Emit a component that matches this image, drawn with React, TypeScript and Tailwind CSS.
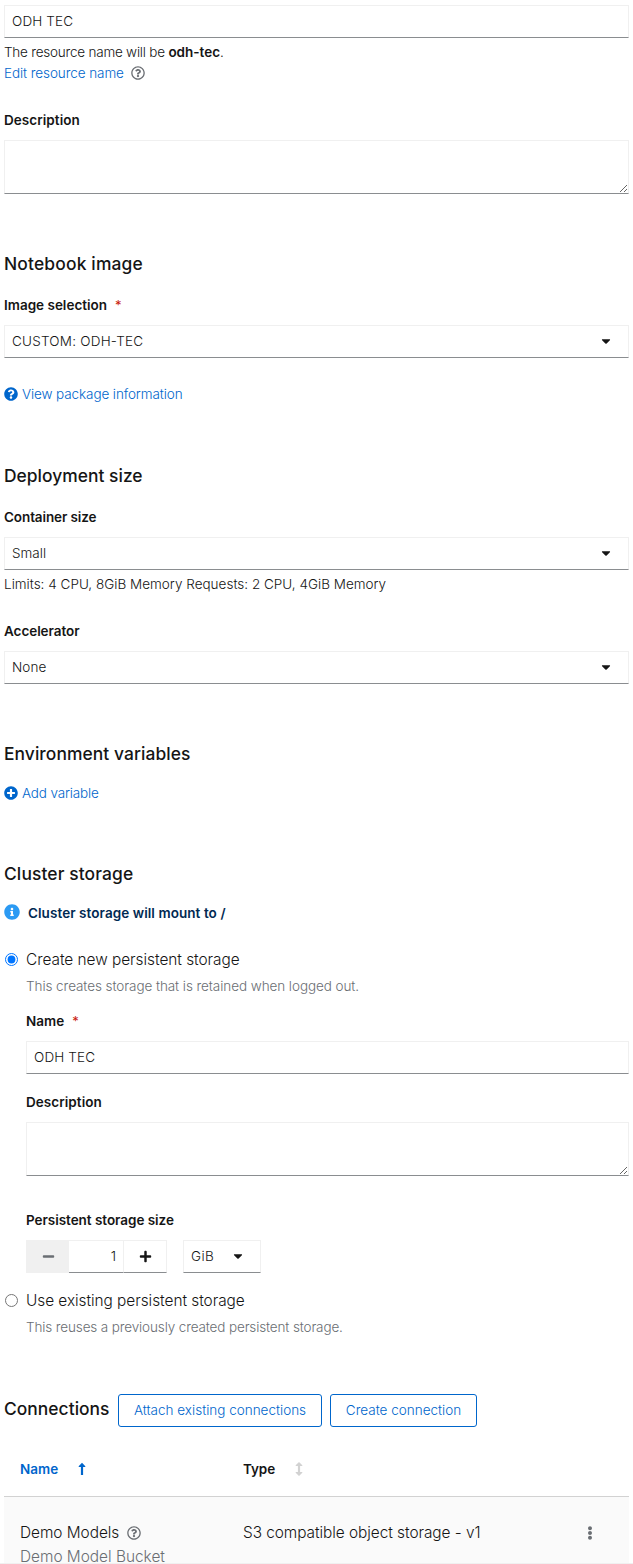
import type { ReactNode } from "react";
import {
  FaCaretDown,
  FaEllipsisV,
  FaInfoCircle,
  FaMinus,
  FaPlus,
  FaPlusCircle,
  FaQuestionCircle,
  FaRegQuestionCircle,
} from "react-icons/fa";

type BlockProps = { className?: string; children?: ReactNode };

const control =
  "border border-[#f0f0f0] border-b-[#8a8d90] bg-white rounded-none outline-none";

function Heading({ className = "", children }: BlockProps) {
  return (
    <h2 className={`h-6 text-[17.4px] leading-6 font-[540] whitespace-nowrap text-[#151515] ${className}`}>
      {children}
    </h2>
  );
}

function Label({ className = "", required, children }: BlockProps & { required?: boolean }) {
  return (
    <div className={`mb-[9px] flex h-[21px] font-semibold text-[#151515] ${className}`}>
      {children}
      {required && <span className="ml-2 text-[13px] font-normal tracking-normal text-[#c9190b]">*</span>}
    </div>
  );
}

function TextField({ value }: { value: string }) {
  return (
    <input
      className={`block h-[33px] w-full px-[7px] pb-[2px] tracking-[0.15px] text-[#151515] ${control}`}
      defaultValue={value}
    />
  );
}

function TextBox() {
  return <textarea className={`block h-[54px] w-full resize-y ${control}`} />;
}

function Select({ children }: BlockProps) {
  return (
    <div className={`flex h-[33px] w-full items-center justify-between pr-[15px] pl-[7px] ${control}`}>
      {children}
      <FaCaretDown className="mb-px size-[14px] text-[#151515]" />
    </div>
  );
}

function SortUpIcon() {
  return (
    <svg viewBox="0 0 8 14" className="mb-px h-[14px] w-2 fill-current">
      <path d="M4 .8 7.3 4.2V5H5.1V13H2.9V5H.7V4.2Z" />
    </svg>
  );
}

function SortIcon() {
  return (
    <svg viewBox="0 0 8 14" className="mb-px h-[14px] w-2 fill-[#d2d2d2]">
      <path d="M4 0 7.3 3.2V4H5.1V10H7.3V10.8L4 14 .7 10.8V10H2.9V4H.7V3.2Z" />
    </svg>
  );
}

export default function App() {
  return (
    <div className="flex h-[1564px] flex-col overflow-hidden border-b border-[#f0f0f0] bg-white px-1 pt-[5px] font-['Inter','Liberation_Sans',sans-serif] text-[13.5px] leading-[21px] font-[350] text-[#151515] *:shrink-0">
      <TextField value="ODH TEC" />
      <div className="mt-1 whitespace-pre">
        <span className="tracking-[-0.22px]">{"The resource name will be "}</span>
        <span className="font-semibold">odh-tec</span>.
      </div>
      <div className="flex items-center gap-[7px] text-[#0066cc]">
        <span className="tracking-[-0.08px]">Edit resource name</span>
        <FaRegQuestionCircle className="mb-px size-[14px] text-[#6a6e73]" />
      </div>

      <Label className="mt-[26px] tracking-[0.05px]">Description</Label>
      <TextBox />

      <Heading className="mt-[58px] tracking-[0.18px]">Notebook image</Heading>
      <Label required className="mt-[19px] tracking-[0px]">Image selection</Label>
      <Select>
        <span className="tracking-[0.22px]">CUSTOM: ODH-TEC</span>
      </Select>
      <div className="mt-[26px] flex items-center gap-1 text-[#0066cc]">
        <FaQuestionCircle className="mb-px size-[14px]" />
        <span className="tracking-[-0.1px]">View package information</span>
      </div>

      <Heading className="mt-[59px] tracking-[0.03px]">Deployment size</Heading>
      <Label className="mt-[19px] tracking-[-0.1px]">Container size</Label>
      <Select>
        <span className="tracking-[0px]">Small</span>
      </Select>
      <div className="mt-1 tracking-[0.01px]">
        Limits: 4 CPU, 8GiB Memory Requests: 2 CPU, 4GiB Memory
      </div>
      <Label className="mt-[26px] tracking-[-0.05px]">Accelerator</Label>
      <Select>
        <span className="tracking-[0.12px]">None</span>
      </Select>

      <Heading className="mt-[58px] tracking-[0.08px]">Environment variables</Heading>
      <div className="mt-[17px] flex items-center gap-1 text-[#0066cc]">
        <FaPlusCircle className="mb-px size-[14px]" />
        <span className="tracking-[-0.15px]">Add variable</span>
      </div>

      <Heading className="mt-[58px] tracking-[0.12px]">Cluster storage</Heading>
      <div className="mt-[17px] flex h-[21px] gap-2 font-semibold text-[#002952]">
        <FaInfoCircle className="mt-px size-4 text-[#2b9af3]" />
        <span className="tracking-[0.07px]">Cluster storage will mount to /</span>
      </div>

      <div className="mt-6 flex h-6 items-center gap-2 text-[15.4px] leading-6">
        <input type="radio" name="storage" defaultChecked className="m-0 mb-px ml-px size-[13px]" />
        <span className="tracking-[-0.03px]">Create new persistent storage</span>
      </div>
      <div className="flex flex-col pl-[22px] *:shrink-0">
        <div className="mt-1 tracking-[-0.07px] text-[#6a6e73]">
          This creates storage that is retained when logged out.
        </div>
        <Label required className="mt-[14px] tracking-[0px]">Name</Label>
        <TextField value="ODH TEC" />
        <Label className="mt-[18px] tracking-[0.05px]">Description</Label>
        <TextBox />
        <Label className="mt-[34px] tracking-[-0.04px]">Persistent storage size</Label>
        <div className="flex h-[33px]">
          <button className="flex w-[43px] items-center justify-center bg-[#f0f0f0]">
            <FaMinus className="ml-px size-[13px] text-[#6a6e73]" />
          </button>
          <input
            className={`w-[55px] border-l-0 pr-[7px] text-right ${control}`}
            defaultValue="1"
          />
          <button className={`flex w-[43px] items-center justify-center border-l-0 ${control}`}>
            <FaPlus className="size-[13px]" />
          </button>
          <div className={`ml-4 flex w-[78px] items-center justify-between pr-[15px] pl-[7px] ${control}`}>
            <span className="tracking-[0.39px]">GiB</span>
            <FaCaretDown className="mb-px size-[14px]" />
          </div>
        </div>
      </div>
      <div className="mt-4 flex h-6 items-center gap-2 text-[15.4px] leading-6">
        <input type="radio" name="storage" className="m-0 mb-px ml-px size-[13px]" />
        <span className="tracking-[-0.04px]">Use existing persistent storage</span>
      </div>
      <div className="mt-1 pl-[22px] tracking-[-0.13px] text-[#6a6e73]">
        This reuses a previously created persistent storage.
      </div>

      <div className="mt-14 flex h-[33px] gap-2">
        <Heading className="mt-[3px] w-[106px] tracking-[0.04px]">Connections</Heading>
        <button className="w-[204px] rounded-[3px] border border-[#0066cc] tracking-[0px] text-[#0066cc]">
          Attach existing connections
        </button>
        <button className="w-[147px] rounded-[3px] border border-[#0066cc] tracking-[0px] text-[#0066cc]">
          Create connection
        </button>
      </div>

      <div className="mt-[15px] grid h-[55px] grid-cols-[223px_1fr] items-center border-b border-[#d2d2d2] pt-px pl-4 font-semibold">
        <div className="flex items-center text-[#0066cc]">
          <span className="w-[58px] tracking-[0px]">Name</span>
          <SortUpIcon />
        </div>
        <div className="flex items-center">
          <span className="w-[52px] tracking-[-0.1px]">Type</span>
          <SortIcon />
        </div>
      </div>
      <div className="grid h-[90px] grid-cols-[223px_1fr_54px] items-start bg-[#fafafa] pt-6 pl-4 text-[15.4px] leading-6">
        <div>
          <div className="flex h-6 items-center gap-2">
            <span className="tracking-[-0.03px]">Demo Models</span>
            <FaRegQuestionCircle className="mb-px size-[14px] text-[#6a6e73]" />
          </div>
          <div className="tracking-[0px] text-[#6a6e73]">Demo Model Bucket</div>
        </div>
        <div className="tracking-[-0.05px]">S3 compatible object storage - v1</div>
        <div className="flex h-6 items-center pl-2">
          <FaEllipsisV className="size-[14px] text-[#6a6e73]" />
        </div>
      </div>
    </div>
  );
}
